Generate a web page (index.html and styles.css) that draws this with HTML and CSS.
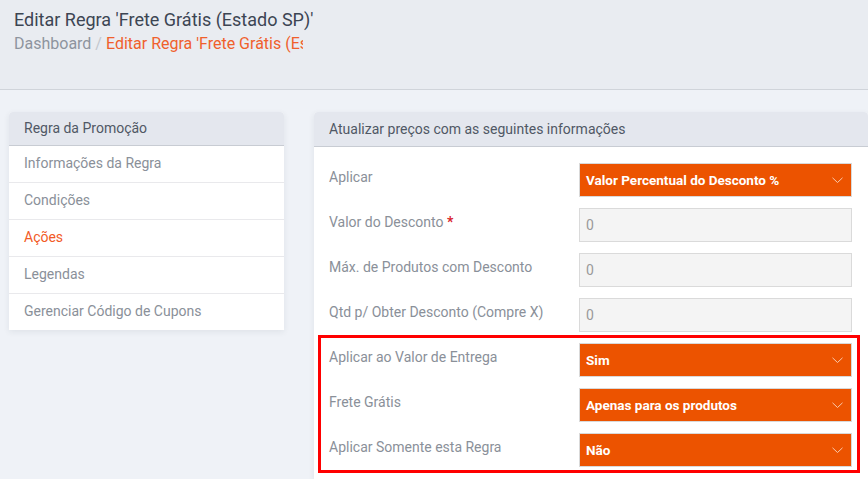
FILE: index.html
```html
<!DOCTYPE html>
<html lang="pt-BR">
<head>
<meta charset="utf-8">
<title>Editar Regra</title>
<link rel="stylesheet" href="styles.css">
</head>
<body>
<header class="page-header">
  <h1 class="title">Editar Regra 'Frete Grátis (Estado SP)'</h1>
  <div class="breadcrumb"><span class="crumb">Dashboard</span><span class="sep"> / </span><span class="crumb-active">Editar Regra 'Frete Grátis (Es</span></div>
</header>
<main class="content">
  <aside class="card side-card">
    <div class="card-head">Regra da Promoção</div>
    <div class="side-item">Informações da Regra</div>
    <div class="side-item">Condições</div>
    <div class="side-item active">Ações</div>
    <div class="side-item">Legendas</div>
    <div class="side-item">Gerenciar Código de Cupons</div>
  </aside>
  <section class="card main-card">
    <div class="card-head main-head">Atualizar preços com as seguintes informações</div>
    <div class="form">
      <div class="row">
        <div class="label">Aplicar</div>
        <div class="select"><span>Valor Percentual do Desconto %</span><svg class="chev" width="11" height="7" viewBox="0 0 11 7"><polyline points="0.5,0.8 5.5,5.5 10.5,0.8" fill="none" stroke="#f8c9aa" stroke-width="1"/></svg></div>
      </div>
      <div class="row">
        <div class="label">Valor do Desconto <span class="req">*</span></div>
        <div class="input">0</div>
      </div>
      <div class="row">
        <div class="label">Máx. de Produtos com Desconto</div>
        <div class="input">0</div>
      </div>
      <div class="row">
        <div class="label">Qtd p/ Obter Desconto (Compre X)</div>
        <div class="input">0</div>
      </div>
      <div class="highlight">
        <div class="row">
          <div class="label">Aplicar ao Valor de Entrega</div>
          <div class="select"><span>Sim</span><svg class="chev" width="11" height="7" viewBox="0 0 11 7"><polyline points="0.5,0.8 5.5,5.5 10.5,0.8" fill="none" stroke="#f8c9aa" stroke-width="1"/></svg></div>
        </div>
        <div class="row">
          <div class="label">Frete Grátis</div>
          <div class="select"><span>Apenas para os produtos</span><svg class="chev" width="11" height="7" viewBox="0 0 11 7"><polyline points="0.5,0.8 5.5,5.5 10.5,0.8" fill="none" stroke="#f8c9aa" stroke-width="1"/></svg></div>
        </div>
        <div class="row">
          <div class="label">Aplicar Somente esta Regra</div>
          <div class="select"><span>Não</span><svg class="chev" width="11" height="7" viewBox="0 0 11 7"><polyline points="0.5,0.8 5.5,5.5 10.5,0.8" fill="none" stroke="#f8c9aa" stroke-width="1"/></svg></div>
        </div>
      </div>
    </div>
  </section>
</main>
</body>
</html>
```
FILE: styles.css
```css
* { box-sizing: border-box; }
html, body { margin: 0; padding: 0; }
body {
  background: #eff2f7;
  font-family: Roboto, "Liberation Sans", sans-serif;
  width: 868px;
  height: 479px;
  overflow: hidden;
}
.page-header {
  background: #e9ecf1;
  height: 90px;
  border-bottom: 1px solid #d0d4da;
  padding: 8px 14px 0;
}
.title {
  margin: 0;
  font-size: 18px;
  font-weight: 400;
  line-height: 24px;
  color: #3c4553;
}
.breadcrumb {
  font-size: 16px;
  line-height: 24px;
  width: 289px;
  overflow: hidden;
  white-space: nowrap;
}
.crumb { color: #8e949e; }
.sep { color: #c3c7ce; }
.crumb-active { color: #f0602c; }
.content {
  display: flex;
  align-items: flex-start;
  gap: 30px;
  padding: 22px 0 0 9px;
}
.card {
  background: #fff;
  border-radius: 4px 4px 0 0;
  box-shadow: 0 2px 6px rgba(40, 50, 70, 0.08);
}
.side-card { width: 275px; }
.main-card { flex: 1; min-height: 367px; }
.card-head {
  background: #e4e7ee;
  height: 34px;
  line-height: 32px;
  border-bottom: 1px solid #c8ccd3;
  border-radius: 4px 4px 0 0;
  padding: 0 15px;
  font-size: 14px;
  color: #505865;
}
.main-head { height: 35px; line-height: 34px; }
.side-item {
  height: 37px;
  line-height: 34px;
  border-bottom: 1px solid #e9e9ec;
  padding: 0 15px;
  font-size: 14px;
  color: #8a9099;
}
.side-item:last-child { border-bottom: 0; height: 36px; }
.side-item.active { color: #f25a26; }
.form { padding: 16px 16px 0 15px; }
.row {
  display: flex;
  height: 34px;
  margin-bottom: 11px;
}
.label {
  width: 250px;
  flex: none;
  padding-top: 4px;
  font-size: 14px;
  line-height: 20px;
  color: #8a9099;
}
.req { color: #d9232d; font-weight: 700; }
.select {
  flex: 1;
  display: flex;
  align-items: center;
  justify-content: space-between;
  background: #ec5300;
  border: 1px solid #d9d9d9;
  padding: 0 8px 0 6px;
  color: #fff;
  font-family: Roboto, "Liberation Sans", sans-serif;
  font-weight: 700;
  font-size: 13.5px;
}
.chev { display: block; }
.input {
  flex: 1;
  display: flex;
  align-items: center;
  background: #f4f4f4;
  border: 1px solid #dadada;
  padding: 0 6px;
  color: #9a9a9a;
  font-size: 14px;
}
.highlight { position: relative; margin-bottom: 11px; }
.highlight .row:last-child { margin-bottom: 0; }
.highlight::after {
  content: "";
  position: absolute;
  top: -8px;
  bottom: -6px;
  left: -11px;
  right: -8px;
  border: 3px solid #ff0000;
  pointer-events: none;
}
```
